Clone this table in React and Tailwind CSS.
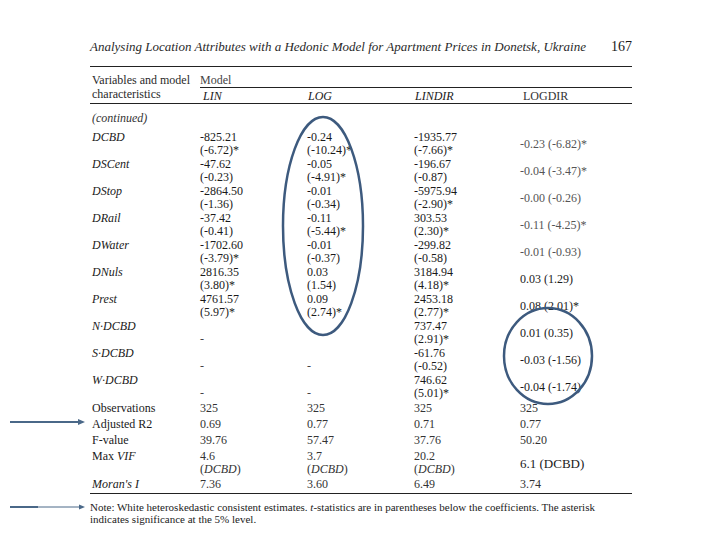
import React from 'react';

const COLS = 'grid grid-cols-[110px_107px_107px_106px_1fr]';

const ROWS = [
  { label: 'DCBD', lin: ['-825.21', '(-6.72)*'], log: ['-0.24', '(-10.24)*'], lindir: ['-1935.77', '(-7.66)*'], logdir: '-0.23 (-6.82)*', faint: true },
  { label: 'DSCent', lin: ['-47.62', '(-0.23)'], log: ['-0.05', '(-4.91)*'], lindir: ['-196.67', '(-0.87)'], logdir: '-0.04 (-3.47)*', faint: true },
  { label: 'DStop', lin: ['-2864.50', '(-1.36)'], log: ['-0.01', '(-0.34)'], lindir: ['-5975.94', '(-2.90)*'], logdir: '-0.00 (-0.26)', faint: true },
  { label: 'DRail', lin: ['-37.42', '(-0.41)'], log: ['-0.11', '(-5.44)*'], lindir: ['303.53', '(2.30)*'], logdir: '-0.11 (-4.25)*', faint: true },
  { label: 'DWater', lin: ['-1702.60', '(-3.79)*'], log: ['-0.01', '(-0.37)'], lindir: ['-299.82', '(-0.58)'], logdir: '-0.01 (-0.93)', faint: true },
  { label: 'DNuls', lin: ['2816.35', '(3.80)*'], log: ['0.03', '(1.54)'], lindir: ['3184.94', '(4.18)*'], logdir: '0.03 (1.29)' },
  { label: 'Prest', lin: ['4761.57', '(5.97)*'], log: ['0.09', '(2.74)*'], lindir: ['2453.18', '(2.77)*'], logdir: '0.08 (2.01)*' },
  { label: 'N·DCBD', lin: '-', log: '', lindir: ['737.47', '(2.91)*'], logdir: '0.01 (0.35)' },
  { label: 'S·DCBD', lin: '-', log: '-', lindir: ['-61.76', '(-0.52)'], logdir: '-0.03 (-1.56)' },
  { label: 'W·DCBD', lin: '-', log: '-', lindir: ['746.62', '(5.01)*'], logdir: '-0.04 (-1.74)' },
];

const STATS = [
  { label: 'Observations', vals: ['325', '325', '325', '325'] },
  { label: 'Adjusted R2', vals: ['0.69', '0.77', '0.71', '0.77'] },
  { label: 'F-value', vals: ['39.76', '57.47', '37.76', '50.20'] },
];

function Cell({ v }) {
  if (Array.isArray(v)) {
    return (
      <div className="flex flex-col">
        <span>{v[0]}</span>
        <span>{v[1]}</span>
      </div>
    );
  }
  return <div className="pt-[13px] text-[#444]">{v}</div>;
}

function DataRow({ row }) {
  return (
    <div className={`${COLS} h-[27px] leading-[13px]`}>
      <div className="pl-0.5 italic">{row.label}</div>
      <Cell v={row.lin} />
      <Cell v={row.log} />
      <Cell v={row.lindir} />
      <div className={`flex items-center ${row.faint ? 'text-[#555]' : 'text-[#1a1a1a]'}`}>{row.logdir}</div>
    </div>
  );
}

// hand-drawn annotations over the scanned table
function Overlay() {
  return (
    <svg className="absolute inset-0 pointer-events-none" width="720" height="540" viewBox="0 0 720 540">
      <ellipse cx="323" cy="226" rx="40" ry="109" fill="none" stroke="#3d5a7e" strokeWidth="2.5" />
      <ellipse cx="548" cy="356" rx="44" ry="48" fill="none" stroke="#3d5a7e" strokeWidth="2.5" />
      <line x1="10" y1="422" x2="80" y2="422" stroke="#4a6888" strokeWidth="2" />
      <polygon points="78,419 85,422 78,425" fill="#4a6888" />
      <line x1="10" y1="507" x2="38" y2="507" stroke="#4a6888" strokeWidth="2" />
      <line x1="38" y1="507" x2="80" y2="507" stroke="#4a6888" strokeWidth="1" />
      <polygon points="79,504.5 85,507 79,509.5" fill="#4a6888" />
    </svg>
  );
}

export default function App() {
  return (
    <div className="relative w-[720px] h-[540px] overflow-hidden bg-white text-[#1a1a1a] font-['Liberation_Serif',serif] text-[12px]">
      {/* Running head */}
      <div className="ml-[90px] w-[542px] pt-[38px] flex justify-between items-baseline leading-[18px]">
        <span className="italic text-[13px] text-[#2a2a2a]">
          Analysing Location Attributes with a Hedonic Model for Apartment Prices in Donetsk, Ukraine
        </span>
        <span className="text-[14px]">167</span>
      </div>

      {/* Table */}
      <div className="ml-[90px] w-[542px] mt-[10px] border-t border-[#222]">
        <div className={`${COLS} border-b border-[#222] leading-[14px]`}>
          <div className="row-span-2 pl-0.5 pt-[6px] text-[#2a2a2a]">
            Variables and model
            <br />
            characteristics
          </div>
          <div className="col-span-4 h-[21px] pt-[6px] border-b border-[#222] text-[#444]">Model</div>
          <div className="h-[15px] pt-px pl-[3px] italic">LIN</div>
          <div className="h-[15px] pt-px pl-px italic">LOG</div>
          <div className="h-[15px] pt-px pl-px italic">LINDIR</div>
          <div className="h-[15px] pt-px pl-[3px] text-[#333]">LOGDIR</div>
        </div>

        <div className="h-[27px] flex items-center pl-0.5 italic text-[#333]">(continued)</div>

        {ROWS.map((row) => (
          <DataRow key={row.label} row={row} />
        ))}

        {STATS.map((s) => (
          <div key={s.label} className={`${COLS} h-[16px] leading-[13px] pt-px`}>
            <div className="pl-0.5">{s.label}</div>
            {s.vals.map((v, i) => (
              <div key={i} className="text-[#333]">{v}</div>
            ))}
          </div>
        ))}

        <div className={`${COLS} h-[28px] leading-[13px] pt-px`}>
          <div className="pl-0.5">
            Max <span className="italic">VIF</span>
          </div>
          {['4.6', '3.7', '20.2'].map((v) => (
            <div key={v} className="flex flex-col text-[#333]">
              <span>{v}</span>
              <span>
                (<span className="italic">DCBD</span>)
              </span>
            </div>
          ))}
          <div className="flex items-center text-[13px]">6.1 (DCBD)</div>
        </div>

        <div className={`${COLS} h-[17px] leading-[13px] pt-px border-b border-[#222] text-[#333]`}>
          <div className="pl-0.5 italic text-[#1a1a1a]">Moran's I</div>
          <div>7.36</div>
          <div>3.60</div>
          <div>6.49</div>
          <div>3.74</div>
        </div>

        <div className="pt-[7px] text-[11px] leading-[12px] text-[#222]">
          Note: White heteroskedastic consistent estimates. <span className="italic">t</span>-statistics are in parentheses below the coefficients. The asterisk
          <br />
          indicates significance at the 5% level.
        </div>
      </div>

      <Overlay />
    </div>
  );
}
